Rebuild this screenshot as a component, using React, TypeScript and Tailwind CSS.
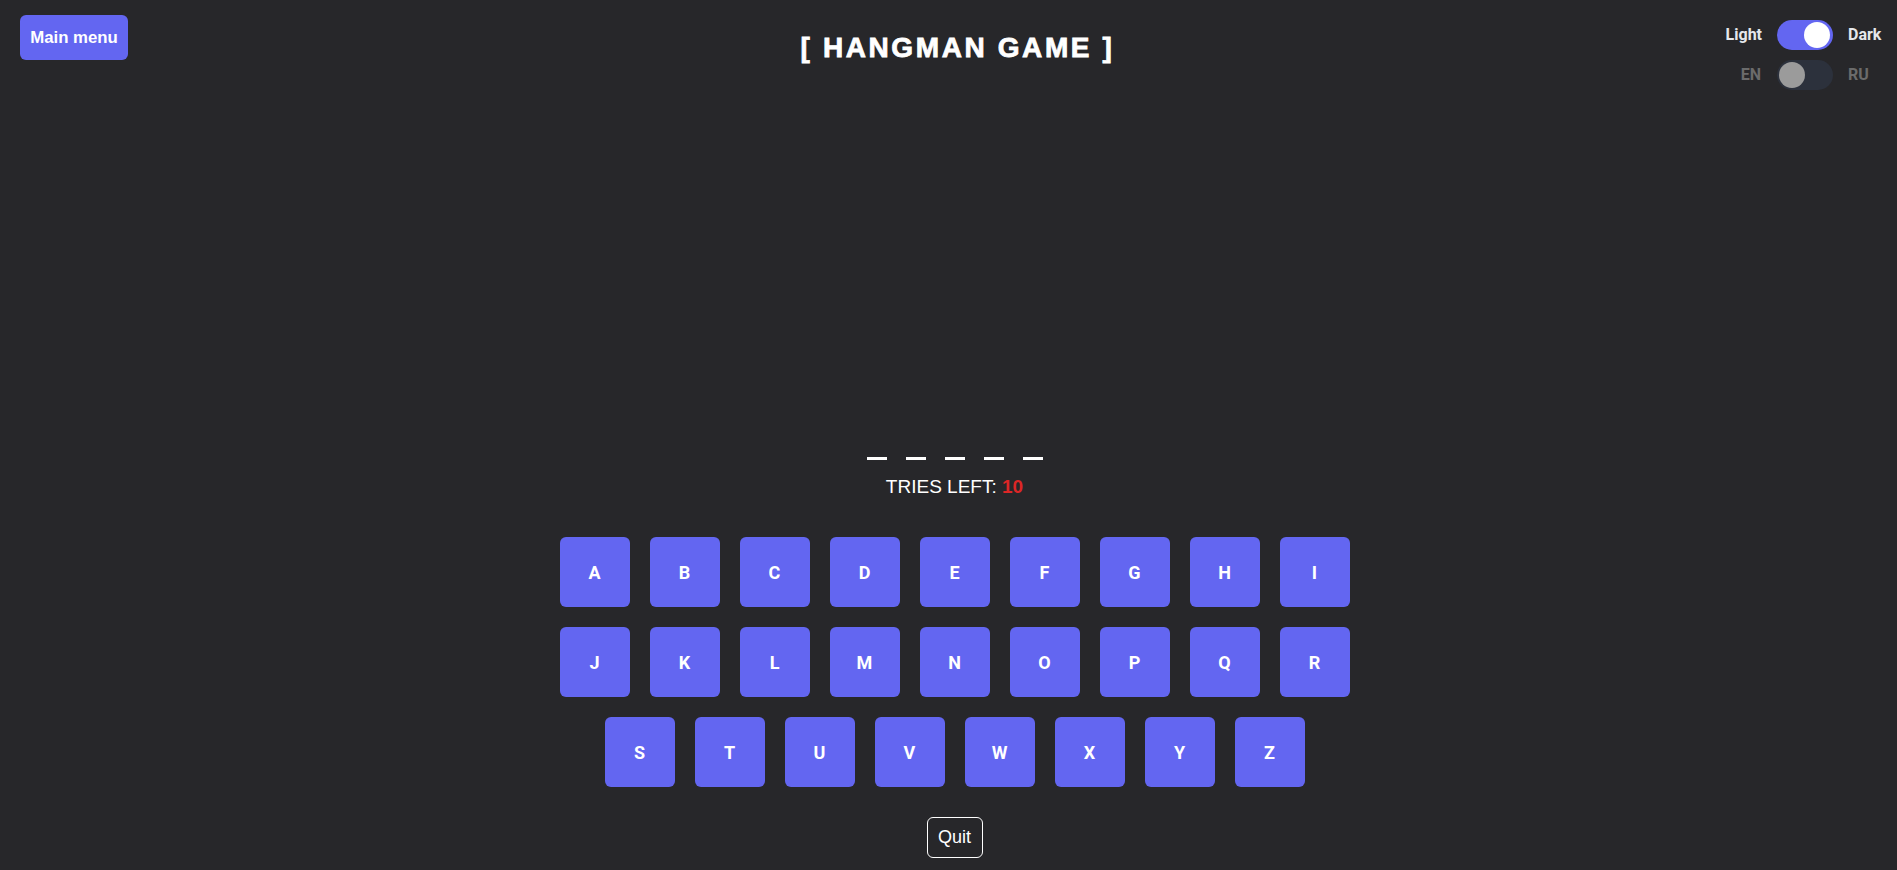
import { useState } from "react";

const ROWS = [
  ["A", "B", "C", "D", "E", "F", "G", "H", "I"],
  ["J", "K", "L", "M", "N", "O", "P", "Q", "R"],
  ["S", "T", "U", "V", "W", "X", "Y", "Z"],
];

function Toggle({ on, active }: { on: boolean; active: boolean }) {
  return (
    <div
      className={`w-[56px] h-[30px] rounded-full p-[2px] flex ${on ? "justify-end pr-[3px]" : "justify-start"} ${
        active ? "bg-[#6366f1]" : "bg-[#2c313c]"
      }`}
    >
      <div className={`w-[26px] h-[26px] rounded-full ${active ? "bg-white" : "bg-[#9b9b9b]"}`} />
    </div>
  );
}

export default function App() {
  const [word] = useState(["", "", "", "", ""]);

  return (
    <div className="min-h-screen bg-[#27272a] text-white font-['Liberation_Sans',Arial,sans-serif]">
      {/* Header */}
      <header className="grid grid-cols-[1fr_auto_1fr] pt-[15px] pl-5 pr-3">
        <div>
          <button className="w-[108px] h-[45px] rounded-md bg-[#6366f1] text-white text-[16.8px] font-bold">
            Main menu
          </button>
        </div>
        <h1 className="pl-[10px] mt-[17px] text-[28px] leading-[32px] font-bold tracking-[2.6px] whitespace-nowrap [-webkit-text-stroke:0.8px_white]">
          [ HANGMAN GAME ]
        </h1>
        <div className="flex justify-end">
          <div className="mt-[5px] grid grid-cols-[auto_56px_38px] gap-x-[14px] gap-y-[10px] items-center font-['Roboto',sans-serif] font-bold text-[16px]">
            <span className="text-right text-[#e5e7eb] pr-px">Light</span>
            <Toggle on active />
            <span className="text-[#e5e7eb] pl-px">Dark</span>
            <span className="text-right text-[#6b6b6b] pr-[2px]">EN</span>
            <Toggle on={false} active={false} />
            <span className="text-[#6b6b6b] pl-px">RU</span>
          </div>
        </div>
      </header>

      {/* Game */}
      <main className="flex flex-col items-center pl-[12px] pt-[367px]">
        <div className="flex gap-[19px]">
          {word.map((_, i) => (
            <div key={i} className="w-[20px] h-[3px] bg-white" />
          ))}
        </div>
        <p className="mt-[15px] text-[19px] leading-[24px]">
          TRIES LEFT: <span className="font-bold text-[#dc2626]">10</span>
        </p>

        <div className="mt-[38px] flex flex-col items-center gap-5">
          {ROWS.map((row, r) => (
            <div key={r} className="flex gap-5">
              {row.map((letter) => (
                <button
                  key={letter}
                  className="w-[70px] h-[70px] rounded-md bg-[#6366f1] text-white text-[18px] font-bold font-['Roboto',sans-serif] flex items-center justify-center"
                >
                  {letter}
                </button>
              ))}
            </div>
          ))}
        </div>

        <button className="mt-[30px] w-[56px] h-[41px] rounded-md border border-white text-[18px] text-white">
          Quit
        </button>
      </main>
    </div>
  );
}
